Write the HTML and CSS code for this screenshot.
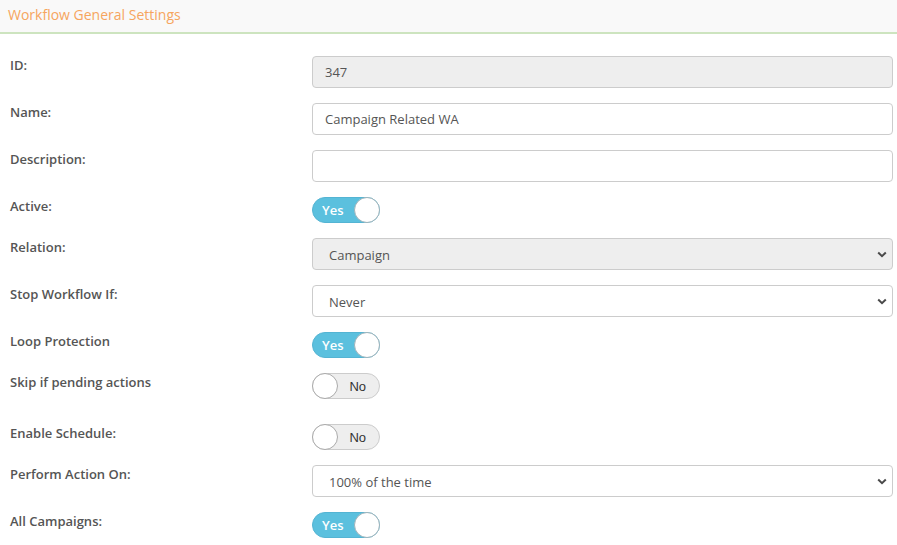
FILE: index.html
```html
<!DOCTYPE html>
<html>
<head>
<meta charset="utf-8">
<link rel="stylesheet" href="styles.css">
</head>
<body>
<div class="header"><span class="title">Workflow General Settings</span></div>
<div class="form">
  <div class="row">
    <div class="label">ID:</div>
    <div class="field disabled">347</div>
  </div>
  <div class="row">
    <div class="label">Name:</div>
    <div class="field">Campaign Related WA</div>
  </div>
  <div class="row">
    <div class="label">Description:</div>
    <div class="field"></div>
  </div>
  <div class="row">
    <div class="label">Active:</div>
    <div><div class="toggle on"><span class="txt">Yes</span><span class="knob"></span></div></div>
  </div>
  <div class="row">
    <div class="label">Relation:</div>
    <div class="field select disabled"><span>Campaign</span><svg class="chev" width="10" height="7" viewBox="0 0 10 7"><path d="M1.2 1.5 L5 5.2 L8.8 1.5" fill="none" stroke="#4a4a4a" stroke-width="2"/></svg></div>
  </div>
  <div class="row">
    <div class="label">Stop Workflow If:</div>
    <div class="field select"><span>Never</span><svg class="chev" width="10" height="7" viewBox="0 0 10 7"><path d="M1.2 1.5 L5 5.2 L8.8 1.5" fill="none" stroke="#4a4a4a" stroke-width="2"/></svg></div>
  </div>
  <div class="row">
    <div class="label">Loop Protection</div>
    <div><div class="toggle on"><span class="txt">Yes</span><span class="knob"></span></div></div>
  </div>
  <div class="row extra">
    <div class="label">Skip if pending actions</div>
    <div><div class="toggle off"><span class="knob"></span><span class="txt">No</span></div></div>
  </div>
  <div class="row">
    <div class="label">Enable Schedule:</div>
    <div><div class="toggle off"><span class="knob"></span><span class="txt">No</span></div></div>
  </div>
  <div class="row">
    <div class="label">Perform Action On:</div>
    <div class="field select"><span>100% of the time</span><svg class="chev" width="10" height="7" viewBox="0 0 10 7"><path d="M1.2 1.5 L5 5.2 L8.8 1.5" fill="none" stroke="#4a4a4a" stroke-width="2"/></svg></div>
  </div>
  <div class="row">
    <div class="label">All Campaigns:</div>
    <div><div class="toggle on"><span class="txt">Yes</span><span class="knob"></span></div></div>
  </div>
</div>
</body>
</html>
```
FILE: styles.css
```css
* { box-sizing: border-box; }
body {
  margin: 0;
  font-family: "Open Sans", "Liberation Sans", sans-serif;
  background: #fff;
  color: #555;
}
.header {
  height: 34px;
  background: #f9f9f9;
  border-bottom: 2px solid #cde4bf;
  padding: 3px 8px 0;
}
.title {
  font-size: 14px;
  line-height: 20px;
  color: #f6a55e;
}
.form {
  padding: 22px 4px 0 0;
}
.row {
  display: grid;
  grid-template-columns: 312px 1fr;
  margin-bottom: 15px;
}
.row.extra { margin-bottom: 25px; }
.label {
  padding-left: 10px;
  font-size: 13px;
  line-height: 18px;
  font-weight: 600;
  color: #555;
}
.field {
  height: 32px;
  border: 1px solid #ccc;
  border-radius: 4px;
  padding: 0 12px;
  display: flex;
  align-items: center;
  font-size: 13px;
  color: #555;
  background: #fff;
}
.field.disabled { background: #eee; }
.field.select {
  padding: 1px 5px 0 16px;
  justify-content: space-between;
}
.chev { display: block; }
.toggle {
  width: 68px;
  height: 26px;
  border-radius: 13px;
  display: flex;
  align-items: center;
  justify-content: space-between;
  font-size: 13px;
}
.toggle.on {
  background: #5bc0de;
  border: 1px solid #54b4d3;
  color: #fff;
  font-weight: 600;
  padding-left: 9px;
}
.toggle.off {
  background: #eee;
  border: 1px solid #ccc;
  color: #333;
  font-family: "Liberation Sans", Arial, sans-serif;
  padding-right: 13px;
}
.knob {
  width: 26px;
  height: 26px;
  border-radius: 50%;
  background: #fff;
  border: 1px solid #aaa;
  margin: -1px;
}
.toggle.on .knob { border-color: #9fb3ba; }
.toggle.off .knob { border-color: #aaa; }
```
